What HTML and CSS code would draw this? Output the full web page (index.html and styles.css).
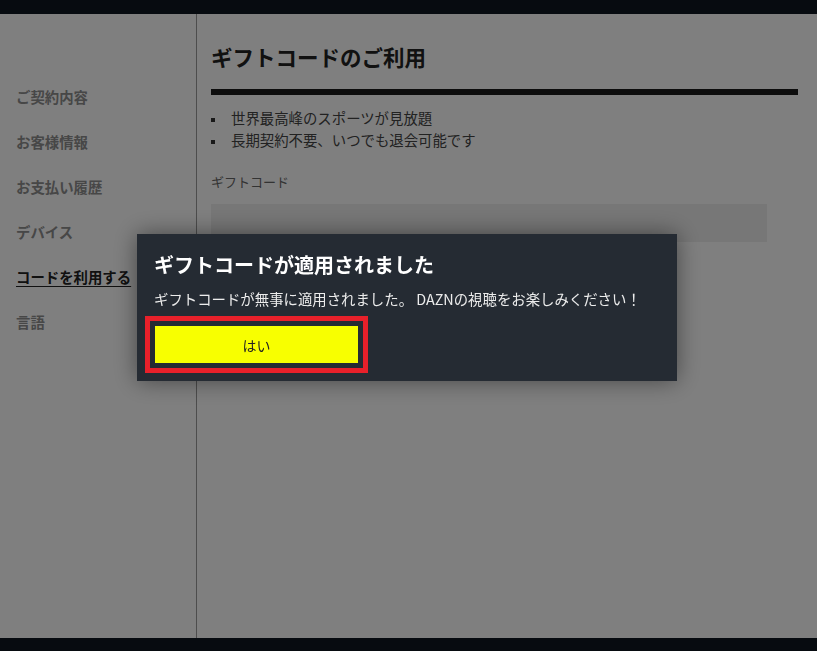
FILE: index.html
```
<!DOCTYPE html>
<html lang="ja">
<head>
    <meta charset="utf-8">
    <title>ギフトコードのご利用</title>
    <link rel="stylesheet" href="styles.css">
</head>
<body>
    <div class="topbar"></div>
    <div class="main">
        <ul class="sidenav">
            <li>ご契約内容</li>
            <li>お客様情報</li>
            <li>お支払い履歴</li>
            <li>デバイス</li>
            <li class="active">コードを利用する</li>
            <li>言語</li>
        </ul>
        <div class="content">
            <h1 class="title">ギフトコードのご利用</h1>
            <ul class="points">
                <li>世界最高峰のスポーツが見放題</li>
                <li>長期契約不要、いつでも退会可能です</li>
            </ul>
            <label class="label">ギフトコード</label>
            <div class="codebox"></div>
        </div>
    </div>
    <div class="footbar"></div>

    <div class="overlay"></div>
    <div class="dialog">
        <h2 class="dialog-title">ギフトコードが適用されました</h2>
        <p class="dialog-text">ギフトコードが無事に適用されました。 DAZNの視聴をお楽しみください！</p>
        <button class="dialog-ok" type="button">はい</button>
    </div>
</body>
</html>
```

FILE: styles.css
```
html, body {
    margin: 0;
    padding: 0;
}

body {
    width: 817px;
    height: 651px;
    background-color: #ffffff;
    font-family: "Noto Sans CJK JP", "Noto Sans", sans-serif;
    overflow: hidden;
}

.topbar {
    height: 14px;
    background-color: #0e1620;
}

.footbar {
    height: 13px;
    background-color: #0e1620;
}

.main {
    display: flex;
    height: 624px;
}

.sidenav {
    width: 196px;
    margin: 0;
    padding: 60px 0 0 0;
    list-style: none;
    border-right: 1px solid #9a9a9a;
}

.sidenav li {
    height: 45px;
    line-height: 45px;
    padding-left: 16px;
    font-size: 14.4px;
    font-weight: bold;
    color: #8e8e8e;
}

.sidenav li.active {
    color: #222222;
    text-decoration: underline;
    text-underline-offset: 3px;
}

.content {
    flex: 1;
    padding: 28px 19px 0 14px;
}

.title {
    margin: 0;
    font-size: 21.5px;
    line-height: 30px;
    font-weight: bold;
    color: #222222;
    padding-bottom: 17px;
    border-bottom: 6px solid #1a1a1a;
}

.points {
    margin: 12px 0 0 0;
    padding: 0;
    list-style: none;
}

.points li {
    position: relative;
    padding-left: 20px;
    font-size: 14.4px;
    line-height: 22px;
    color: #444444;
}

.points li::before {
    content: "";
    position: absolute;
    left: 0;
    top: 11px;
    width: 4px;
    height: 4px;
    background-color: #333333;
}

.label {
    display: block;
    margin-top: 21px;
    font-size: 13px;
    line-height: 20px;
    color: #666666;
}

.codebox {
    width: 556px;
    height: 38px;
    margin-top: 12px;
    background-color: #eeeeee;
}

.overlay {
    position: fixed;
    left: 0;
    top: 0;
    right: 0;
    bottom: 0;
    background-color: rgba(0, 0, 0, 0.5);
}

.dialog {
    position: fixed;
    left: 137px;
    top: 234px;
    width: 540px;
    box-sizing: border-box;
    padding: 17px 17px 18px 17px;
    background-color: #252b33;
    box-shadow: 0 0 22px rgba(0, 0, 0, 0.45);
}

.dialog-title {
    margin: 0;
    font-size: 20px;
    line-height: 28px;
    font-weight: bold;
    color: #ffffff;
}

.dialog-text {
    margin: 10px 0 0 0;
    font-size: 14.4px;
    line-height: 20px;
    color: #ececec;
}

.dialog-ok {
    display: block;
    width: 203px;
    height: 37px;
    margin: 17px 0 0 1px;
    border: none;
    background-color: #f8ff00;
    color: #222222;
    font-family: "Noto Sans CJK JP", sans-serif;
    font-size: 14px;
    outline: 5px solid #e8202a;
    outline-offset: 5px;
}
```
